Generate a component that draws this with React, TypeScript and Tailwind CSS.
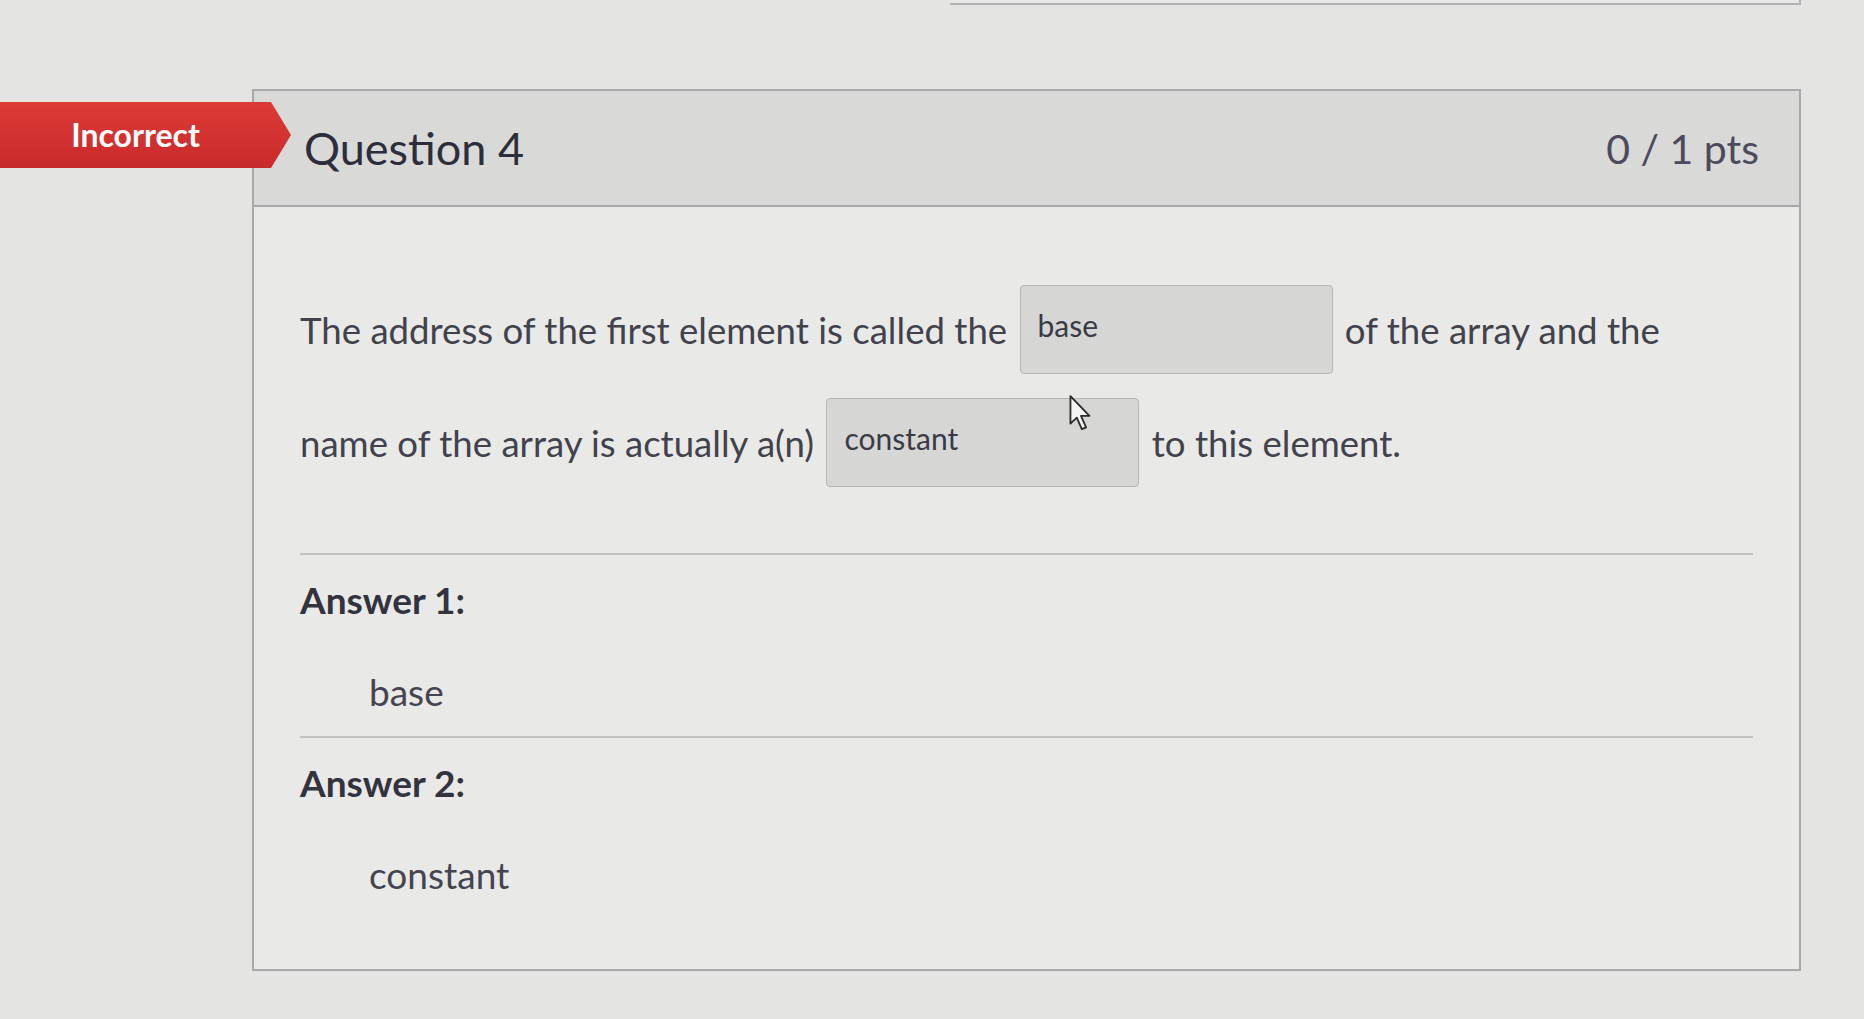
const Blank = ({ children }: { children: string }) => {
  return (
    <span className="mx-[3px] mt-[8px] mb-[16px] inline-block h-[89px] w-[313px] rounded-[4px] border border-[#b7b7b7] bg-[#d6d6d5] px-[17px] pt-[21px] align-[7px] text-[30px] leading-[36px] text-[#3a3a44]">
      {children}
    </span>
  );
};

const AnswerBlock = ({ label, value }: { label: string; value: string }) => {
  return (
    <div className="pt-[23px] pb-[22px]">
      <div className="text-[37px] font-bold leading-[44px] text-[#33333e]">{label}</div>
      <div className="mt-[48px] pl-[69px] text-[37px] leading-[44px] text-[#45454f]">{value}</div>
    </div>
  );
};

const App = () => {
  return (
    <div className="relative min-h-screen w-full overflow-hidden bg-[#e4e4e2] font-['Lato','Noto_Sans',sans-serif]">
      {/* bottom edge of the previous question */}
      <div className="ml-[950px] mr-[63px] h-[5px] border-r-2 border-b-2 border-[#b3b3b5] bg-[#e8e8e6]" />

      <div className="mt-[84px] ml-[252px] w-[1549px] border-2 border-[#a9a9ac] bg-[#e9e9e7]">
        <div className="flex h-[116px] items-center justify-between border-b-2 border-[#a9a9ac] bg-[#d9d9d8] pr-[40px] pl-[50px]">
          <h2 className="text-[45px] leading-none text-[#2e2e3b]">Question 4</h2>
          <span className="text-[41px] leading-none text-[#4c4a5c]">0 / 1 pts</span>
        </div>

        <div className="px-[46px] pt-[70px] pb-[50px]">
          <p className="text-[36.6px] leading-[1.4] text-[#42424c]">
            The address of the first element is called the <Blank>base</Blank> of the array and the
            <br />
            name of the array is actually a(n) <Blank>constant</Blank> to this element.
          </p>

          <div className="mt-[50px] border-t-2 border-[#c3c3c3]" />
          <AnswerBlock label="Answer 1:" value="base" />
          <div className="border-t-2 border-[#c3c3c3]" />
          <AnswerBlock label="Answer 2:" value="constant" />
        </div>
      </div>

      {/* result badge */}
      <div className="absolute top-[102px] left-0 flex h-[66px] w-[291px] items-center justify-center bg-gradient-to-b from-[#dc3a36] to-[#c92a2b] pr-[20px] [clip-path:polygon(0_0,271px_0,291px_50%,271px_100%,0_100%)]">
        <span className="text-[32px] font-bold leading-none text-white">Incorrect</span>
      </div>

      {/* mouse pointer */}
      <svg
        className="absolute top-[394px] left-[1068px]"
        width="26"
        height="38"
        viewBox="0 0 18 27"
        fill="none"
      >
        <path
          d="M1.5 1.5 L1.5 21 L6 16.8 L9.6 25 L12.6 23.7 L9 15.6 L15 15.6 Z"
          fill="#f4f4f4"
          stroke="#2a2a2a"
          strokeWidth="1.3"
          strokeLinejoin="round"
        />
      </svg>
    </div>
  );
};

export default App;
